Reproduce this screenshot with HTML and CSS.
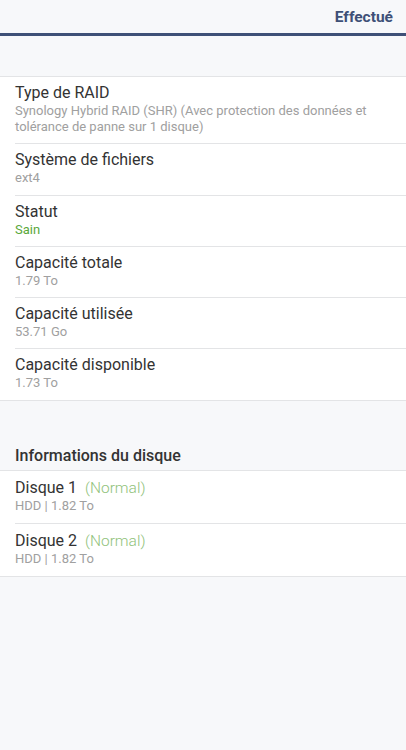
FILE: index.html
```html
<!DOCTYPE html>
<html lang="fr">
<head>
    <meta charset="UTF-8">
    <meta name="viewport" content="width=device-width, initial-scale=1.0">
    <title>Volume</title>
    <link rel="stylesheet" href="styles.css">
</head>
<body>

<header class="topbar">
    <span class="done-btn">Effectué</span>
</header>

<div class="spacer"></div>

<ul class="list">
    <li class="item">
        <div class="title">Type de RAID</div>
        <div class="sub">Synology Hybrid RAID (SHR) (Avec protection des données et tolérance de panne sur 1 disque)</div>
    </li>
    <li class="item">
        <div class="title">Système de fichiers</div>
        <div class="sub">ext4</div>
    </li>
    <li class="item">
        <div class="title">Statut</div>
        <div class="sub ok">Sain</div>
    </li>
    <li class="item">
        <div class="title">Capacité totale</div>
        <div class="sub">1.79 To</div>
    </li>
    <li class="item">
        <div class="title">Capacité utilisée</div>
        <div class="sub">53.71 Go</div>
    </li>
    <li class="item">
        <div class="title">Capacité disponible</div>
        <div class="sub">1.73 To</div>
    </li>
</ul>

<div class="section-head">Informations du disque</div>

<ul class="list disks">
    <li class="item">
        <div class="title">Disque 1 <span class="state">(Normal)</span></div>
        <div class="sub">HDD | 1.82 To</div>
    </li>
    <li class="item">
        <div class="title">Disque 2 <span class="state">(Normal)</span></div>
        <div class="sub">HDD | 1.82 To</div>
    </li>
</ul>

</body>
</html>
```

FILE: styles.css
```css
body {
    font-family: Roboto, "Noto Sans", sans-serif;
    margin: 0;
    padding: 0;
    background-color: #f7f8fa;
    color: #333;
}
.topbar {
    height: 33px;
    border-bottom: 3px solid #3e5077;
    display: flex;
    justify-content: flex-end;
    align-items: center;
    padding: 0 13px;
}
.done-btn {
    color: #3e5077;
    font-weight: bold;
    font-size: 15.5px;
}
.spacer {
    height: 40px;
}
.list {
    list-style: none;
    margin: 0;
    padding: 0 0 0 15px;
    background: #ffffff;
    border-top: 1px solid #e3e4e6;
    border-bottom: 1px solid #e3e4e6;
}
.item {
    padding: 6px 15px 8.3px 0;
    border-bottom: 1px solid #e3e4e6;
}
.disks .item {
    padding: 7px 15px 9px 0;
}
.item:last-child {
    border-bottom: none;
}
.title {
    font-size: 16px;
    line-height: 20px;
    color: #333;
}
.sub {
    font-size: 13px;
    line-height: 16px;
    color: #a0a0a0;
}
.sub.ok {
    color: #5aa83a;
}
.state {
    color: #90c27a;
    font-weight: 300;
    font-size: 15.5px;
    margin-left: 4px;
}
.section-head {
    margin-top: 40px;
    padding: 6px 15px 5px;
    line-height: 18px;
    font-size: 16px;
    font-weight: 500;
    color: #333;
}
```
